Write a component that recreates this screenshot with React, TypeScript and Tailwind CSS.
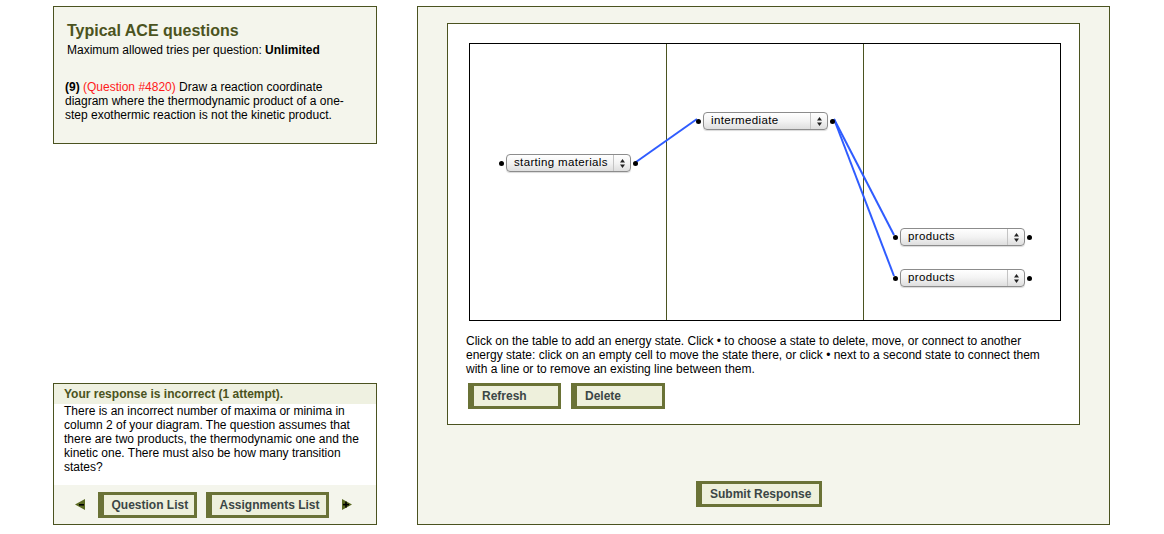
import React from 'react';

const font = { fontFamily: '"Liberation Sans", Arial, sans-serif' };

function Btn({ label, width }: { label: string; width: string }) {
  return (
    <div
      className={`${width} h-[26px] flex items-center pl-[8px] bg-[#eef0dc] border-l-[6px] border-t-[3px] border-b-[3px] border-r-[3px] border-[#6a7236] text-[12px] font-bold text-[#3b4646]`}
    >
      {label}
    </div>
  );
}

function Dot() {
  return <div className="w-[5px] h-[5px] rounded-full bg-black" />;
}

function StateSelect({ label, left, top }: { label: string; left: string; top: string }) {
  return (
    <div className={`absolute ${left} ${top} flex items-center gap-[2px]`}>
      <Dot />
      <div className="w-[125px] h-[18px] flex items-stretch rounded-[4px] border border-[#8c8c8c] bg-gradient-to-b from-white via-[#f3f3f3] to-[#dedede] shadow-[0_1px_1px_rgba(0,0,0,0.15)]">
        <div className="flex-1 flex items-center pl-[7px] text-[11.5px] tracking-[0.35px] text-black">{label}</div>
        <div className="w-[17px] border-l border-[#c4c4c4] flex items-center justify-center">
          <svg width="7" height="11" viewBox="0 0 7 11">
            <path d="M3.5 1 L6 4.5 L1 4.5 Z" fill="#222" />
            <path d="M3.5 10 L6 6.5 L1 6.5 Z" fill="#222" />
          </svg>
        </div>
      </div>
      <Dot />
    </div>
  );
}

function ArrowLeft() {
  return (
    <svg width="12" height="13" viewBox="0 0 12 13">
      <path d="M1 6.5 L11 1 L11 12 Z" fill="#5b6a22" />
      <rect x="5" y="6" width="5" height="1.6" fill="#000" />
    </svg>
  );
}

function ArrowRight() {
  return (
    <svg width="12" height="13" viewBox="0 0 12 13">
      <path d="M11 6.5 L1 1 L1 12 Z" fill="#5b6a22" />
      <rect x="2" y="5.8" width="6" height="1.6" fill="#000" />
      <rect x="4.2" y="3.6" width="1.6" height="6" fill="#000" />
    </svg>
  );
}

export default function App() {
  return (
    <div className="w-[1164px] h-[534px] bg-white flex gap-[40px] pt-[6px] pl-[53px]" style={font}>
      {/* left column */}
      <div className="w-[324px] h-[519px] flex flex-col justify-between">
        <div className="h-[138px] border border-[#4b5320] bg-[#f4f5ec] pl-[11px] pt-[14px]">
          <div className="text-[16px] leading-[20px] font-bold text-[#4b5320] pl-[2px]">Typical ACE questions</div>
          <div className="text-[12px] leading-[14px] text-black pl-[2px] mt-[2px]">
            Maximum allowed tries per question: <b>Unlimited</b>
          </div>
          <div className="text-[12px] leading-[14px] text-black mt-[23px]">
            <b>(9)</b> <span className="text-[#ff1a1a]">(Question #4820)</span> Draw a reaction coordinate
            <br />
            diagram where the thermodynamic product of a one-
            <br />
            step exothermic reaction is not the kinetic product.
          </div>
        </div>

        <div className="h-[142px] border border-[#4b5320] flex flex-col">
          <div className="h-[20px] bg-[#eff1e1] pl-[10px] flex items-center text-[12px] font-bold text-[#4b5320]">
            Your response is incorrect (1 attempt).
          </div>
          <div className="h-[81px] bg-white pl-[10px] text-[12px] leading-[14px] text-black">
            There is an incorrect number of maxima or minima in
            <br />
            column 2 of your diagram. The question assumes that
            <br />
            there are two products, the thermodynamic one and the
            <br />
            kinetic one. There must also be how many transition
            <br />
            states?
          </div>
          <div className="flex-1 bg-[#f4f5ec] flex items-center justify-center gap-[9px] pr-[4px]">
            <div className="mr-[3px] flex items-center">
              <ArrowLeft />
            </div>
            <Btn label="Question List" width="w-[99px]" />
            <Btn label="Assignments List" width="w-[123px]" />
            <div className="ml-[3px] flex items-center">
              <ArrowRight />
            </div>
          </div>
        </div>
      </div>

      {/* right panel */}
      <div className="w-[693px] h-[519px] border border-[#4b5320] bg-[#f4f5ec] pt-[16px] pl-[29px] flex flex-col">
        <div className="w-[633px] h-[402px] border border-[#4b5320] bg-white pt-[19px] pl-[18px]">
          <div className="relative ml-[3px] w-[592px] h-[278px] border border-black flex">
            <div className="w-[197px] h-full border-r border-[#4b5320]" />
            <div className="w-[197px] h-full border-r border-[#4b5320]" />
            <div className="flex-1 h-full" />
            <svg className="absolute left-0 top-0" width="592" height="278" viewBox="0 0 592 278">
              <g stroke="#2f5cff" strokeWidth="2" fill="none">
                <line x1="166" y1="118" x2="227" y2="75" />
                <line x1="364" y1="75" x2="424" y2="191" />
                <line x1="364" y1="75" x2="424" y2="232" />
              </g>
            </svg>
            <StateSelect label="starting materials" left="left-[29px]" top="top-[110px]" />
            <StateSelect label="intermediate" left="left-[226px]" top="top-[68px]" />
            <StateSelect label="products" left="left-[423px]" top="top-[184px]" />
            <StateSelect label="products" left="left-[423px]" top="top-[225px]" />
          </div>
          <div className="mt-[13px] text-[12px] leading-[14px] text-black">
            Click on the table to add an energy state. Click • to choose a state to delete, move, or connect to another
            <br />
            energy state: click on an empty cell to move the state there, or click • next to a second state to connect them
            <br />
            with a line or to remove an existing line between them.
          </div>
          <div className="mt-[7px] ml-[2px] flex gap-[10px]">
            <Btn label="Refresh" width="w-[93px]" />
            <Btn label="Delete" width="w-[94px]" />
          </div>
        </div>
        <div className="mt-[56px] ml-[249px]">
          <Btn label="Submit Response" width="w-[126px]" />
        </div>
      </div>
    </div>
  );
}
